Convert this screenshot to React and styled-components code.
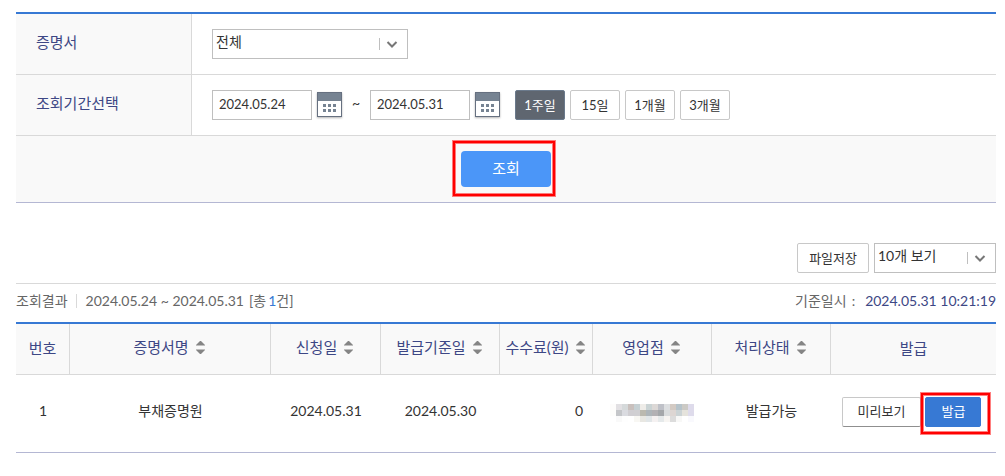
import React, { useState } from 'react';
import styled, { createGlobalStyle } from 'styled-components';

const GlobalStyle = createGlobalStyle`
    * {
        box-sizing: border-box;
    }

    body {
        margin: 0;
        background: #fff;
        color: #333;
        font-family: Lato, "Noto Sans CJK KR", sans-serif;
        font-size: 14px;
        line-height: 20px;
    }

    button, input, select {
        font-family: inherit;
        margin: 0;
    }
`;

const Page = styled.main`
    padding: 12px 9px 23px 16px;
`;

const SearchForm = styled.form`
    border-top: 2px solid #3779d4;
    border-bottom: 1px solid #b4b7d3;
`;

const FormRow = styled.div`
    display: flex;
    min-height: 61px;
    border-bottom: 1px solid #d9d9d9;
`;

const FormLabel = styled.label`
    flex: 0 0 176px;
    padding: 18px 20px;
    background: #f9f9f9;
    border-right: 1px solid #d9d9d9;
    color: #3d4785;
    font-size: 15px;
`;

const FormField = styled.div`
    flex: 1;
    display: flex;
    align-items: center;
    padding: 0 20px;
`;

const SelectBox = styled.div`
    position: relative;
    width: ${props => props.$width};

    & select {
        display: block;
        width: 100%;
        height: 30px;
        padding: 0 30px 6px 3px;
        border: 1px solid #bfbfbf;
        border-radius: 0;
        background: #fff;
        color: #333;
        font-size: 14px;
        appearance: none;
    }

    & svg {
        position: absolute;
        top: 9px;
        right: 10px;
        pointer-events: none;
    }
`;

const DateInput = styled.input`
    width: 100px;
    height: 30px;
    padding: 0 6px 2px;
    border: 1px solid #bfbfbf;
    background: #fff;
    color: #333;
    font-size: 13px;
`;

const CalendarButton = styled.button`
    width: 25px;
    height: 25px;
    margin-left: 5px;
    padding: 0;
    border: 0;
    background: none;
    box-shadow: 0 1px 2px rgba(0,0,0,0.3);

    & svg {
        display: block;
    }
`;

const CalendarField = styled.div`
    display: flex;
    padding-top: 2px;
    height: 30px;
`;

const Tilde = styled.span`
    width: 28px;
    padding-bottom: 4px;
    text-align: center;
`;

const PeriodGroup = styled.div`
    display: flex;
    gap: 5px;
    margin-left: 15px;
`;

const SmallButton = styled.button`
    height: 30px;
    padding: 0 ${props => props.$pad || '0px'} 2px;
    min-width: 50px;
    border: 1px solid ${props => props.$active ? '#6b7a8c' : '#c8c8c8'};
    border-radius: 2px;
    background: ${props => props.$active ? '#5f6670' : '#fff'};
    color: ${props => props.$active ? '#fff' : '#333'};
    font-size: 13px;
    white-space: nowrap;
`;

const SubmitArea = styled.div`
    display: flex;
    justify-content: center;
    padding: 15px 0;
    background: #f9f9f9;
`;

const Marked = styled.div`
    position: relative;
    display: inline-flex;
`;

const Mark = styled.span`
    position: absolute;
    inset: ${props => props.$inset};
    border: 2px solid #f00;
    box-shadow: 0 0 0 1px rgba(255,0,0,0.5), inset 0 0 0 1px rgba(255,0,0,0.5);
    pointer-events: none;
`;

const SubmitButton = styled.button`
    width: 90px;
    height: 36px;
    padding: 0 0 4px;
    border: 0;
    border-radius: 4px;
    background: #4b96f8;
    color: #fff;
    font-size: 15px;
`;

const ToolBar = styled.div`
    display: flex;
    justify-content: flex-end;
    gap: 5px;
    margin-top: 40px;
    padding-bottom: 10px;
    border-bottom: 1px solid #d9d9d9;
`;

const InfoBar = styled.div`
    display: flex;
    justify-content: space-between;
    padding: 7px 0 11px;
    color: #666;

    & p {
        display: flex;
        align-items: center;
        margin: 0;
    }

    & .period {
        margin-left: 8px;
        padding-left: 9px;
        border-left: 1px solid #d9d9d9;
        line-height: 14px;
    }

    & .count {
        margin-left: 5px;
    }

    & .count em {
        margin-left: 2px;
        color: #3779d4;
        font-style: normal;
    }

    & .colon {
        margin: 0 10px 0 5px;
    }

    & time {
        color: #3d4785;
    }
`;

const ResultTable = styled.table`
    width: 100%;
    table-layout: fixed;
    border-collapse: separate;
    border-spacing: 0;
    border-top: 2px solid #3779d4;
    border-bottom: 1px solid #b4b7d3;

    & th {
        height: 51px;
        padding: 0 0 2px;
        background: #f9f9f9;
        border-right: 1px solid #d9d9d9;
        border-bottom: 1px solid #d9d9d9;
        color: #3d4785;
        font-size: 15px;
        font-weight: 400;
        white-space: nowrap;
    }

    & th:last-child {
        border-right: 0;
    }

    & td {
        height: 77px;
        padding: 0 0 6px;
        text-align: center;
    }

    & td.fee {
        padding-right: 10px;
        text-align: right;
    }
`;

const SortButton = styled.button`
    display: inline-flex;
    align-items: center;
    gap: 7px;
    padding: 0 2px 2px 0;
    border: 0;
    background: none;
    color: inherit;
    font-size: 15px;
    line-height: 20px;
`;

const Actions = styled.div`
    display: flex;
    justify-content: center;
    gap: 4px;
    padding: 2px 4px 0 0;
`;

const PreviewButton = styled(SmallButton)`
    border-bottom-color: #8f8f8f;
`;

const IssueButton = styled(SmallButton)`
    border-color: #3779d4;
    background: #3779d4;
    color: #fff;
`;

const MosaicSvg = styled.svg`
    display: block;
    margin: 4px auto 0;
`;

function Arrow() {
    return (
        <svg width="19" height="12" viewBox="0 0 19 12" fill="none">
            <path d="M0.5 0v12" stroke="#bfbfbf" />
            <path d="M8.5 4l4.5 4.5l4.5-4.5" stroke="#777" strokeWidth="2" />
        </svg>
    )
}

function CalendarIcon() {
    return (
        <svg width="25" height="25" viewBox="0 0 25 25" shapeRendering="crispEdges">
            <rect x="0.5" y="0.5" width="24" height="24" fill="#fff" stroke="#667080" />
            <path d="M1 1h23v8H1z" fill="#768392" />
            <path d="M6 12h3v3H6zM11 12h3v3h-3zM16 12h3v3h-3zM6 17h3v3H6zM11 17h3v3h-3zM16 17h3v3h-3z" fill="#768392" />
        </svg>
    )
}

function SortIcon() {
    return (
        <svg width="9" height="13" viewBox="0 0 9 13" fill="#858585">
            <path d="M0 4.5V4l4-4h1l4 4v0.5zM0 8.5h9V9l-4 4H4L0 9z" />
        </svg>
    )
}

// 영업점명 모자이크
const mosaic = [
    ['#fdfcfb', '#e2e0e3', '#d5d9da', '#c9c0bd', '#c6d0d3', '#eeece8', '#cad3d4', '#dcd8d6', '#bfc1c8', '#dddfe1', '#d3cac3', '#b6c3ca', '#cccac5', '#dedbeb'],
    ['#fdfdfb', '#c4c6c9', '#dadbe0', '#d0ced2', '#d0cfd2', '#bbb9af', '#aeb5b9', '#b3b1b4', '#a4a7aa', '#d9dcdd', '#ddd6d3', '#cbd3d5', '#e5e3dc', '#dedbeb'],
    ['#fff', '#f9f9f9', '#fefefe', '#fff', '#f8f7f3', '#e8e7e2', '#e1e6e8', '#f5f1f1', '#e5e9ea', '#f7f5f2', '#dcdcdc', '#f8f8f7', '#fff', '#f9f9fd'],
];

function Mosaic() {
    return (
        <MosaicSvg width="86" height="18" viewBox="0 0 86 18" shapeRendering="crispEdges">
            {mosaic.map((row, y) => row.map((color, x) => (
                <rect key={`${x}-${y}`} x={x * 6} y={y * 6} width="6" height="6" fill={color} />
            )))}
        </MosaicSvg>
    )
}

const columns = [
    { name: '번호', width: 54 },
    { name: '증명서명', sort: true },
    { name: '신청일', width: 110, sort: true },
    { name: '발급기준일', width: 119, sort: true },
    { name: '수수료(원)', width: 93, sort: true },
    { name: '영업점', width: 119, sort: true },
    { name: '처리상태', width: 119, sort: true },
    { name: '발급', width: 165 },
];

const periods = ['1주일', '15일', '1개월', '3개월'];

function App() {

    const [period, setPeriod] = useState('1주일');

    return (
        <Page>
            <GlobalStyle />
            <SearchForm onSubmit={e => e.preventDefault()}>
                <FormRow>
                    <FormLabel htmlFor="cert">증명서</FormLabel>
                    <FormField>
                        <SelectBox $width="196px">
                            <select id="cert"><option>전체</option></select>
                            <Arrow />
                        </SelectBox>
                    </FormField>
                </FormRow>
                <FormRow>
                    <FormLabel htmlFor="from">조회기간선택</FormLabel>
                    <FormField>
                        <DateInput id="from" defaultValue="2024.05.24" />
                        <CalendarField>
                            <CalendarButton type="button" aria-label="시작일 선택"><CalendarIcon /></CalendarButton>
                        </CalendarField>
                        <Tilde>~</Tilde>
                        <DateInput aria-label="종료일" defaultValue="2024.05.31" />
                        <CalendarField>
                            <CalendarButton type="button" aria-label="종료일 선택"><CalendarIcon /></CalendarButton>
                        </CalendarField>
                        <PeriodGroup>
                            {periods.map(p => (
                                <SmallButton key={p} type="button" $active={p === period} onClick={() => setPeriod(p)}>{p}</SmallButton>
                            ))}
                        </PeriodGroup>
                    </FormField>
                </FormRow>
                <SubmitArea>
                    <Marked>
                        <SubmitButton type="submit">조회</SubmitButton>
                        <Mark $inset="-10px -4px -9px -8px" />
                    </Marked>
                </SubmitArea>
            </SearchForm>

            <ToolBar>
                <SmallButton type="button" $pad="11px">파일저장</SmallButton>
                <SelectBox $width="122px">
                    <select aria-label="보기 개수"><option>10개 보기</option></select>
                    <Arrow />
                </SelectBox>
            </ToolBar>
            <InfoBar>
                <p>
                    조회결과
                    <span className="period">2024.05.24 ~ 2024.05.31</span>
                    <span className="count">[총<em>1</em>건]</span>
                </p>
                <p>기준일시<span className="colon">:</span><time>2024.05.31 10:21:19</time></p>
            </InfoBar>
            <ResultTable>
                <colgroup>
                    {columns.map(c => <col key={c.name} width={c.width} />)}
                </colgroup>
                <thead>
                    <tr>
                        {columns.map(c => (
                            <th key={c.name} scope="col">
                                {c.sort ? <SortButton type="button">{c.name}<SortIcon /></SortButton> : c.name}
                            </th>
                        ))}
                    </tr>
                </thead>
                <tbody>
                    <tr>
                        <td>1</td>
                        <td>부채증명원</td>
                        <td>2024.05.31</td>
                        <td>2024.05.30</td>
                        <td className="fee">0</td>
                        <td><Mosaic /></td>
                        <td>발급가능</td>
                        <td>
                            <Actions>
                                <PreviewButton type="button" $pad="15px">미리보기</PreviewButton>
                                <Marked>
                                    <IssueButton type="button" $pad="15px">발급</IssueButton>
                                    <Mark $inset="-4px -9px -7px -4px" />
                                </Marked>
                            </Actions>
                        </td>
                    </tr>
                </tbody>
            </ResultTable>
        </Page>
    );
}

export default App;
